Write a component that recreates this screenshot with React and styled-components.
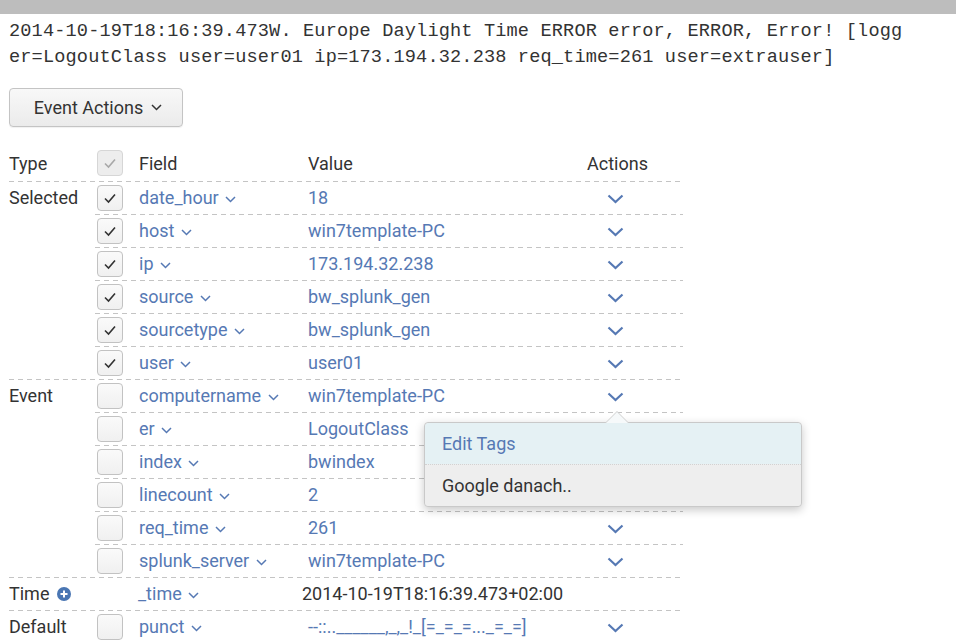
import React from "react";
import styled, { createGlobalStyle } from "styled-components";

const GlobalStyle = createGlobalStyle`
  body {
    margin: 0;
    background: #fff;
    font-family: Roboto, "Liberation Sans", sans-serif;
    color: #333;
  }
`;

const BLUE = "#5679b4";

const groups = [
  {
    type: "Selected",
    rows: [
      { field: "date_hour", value: "18", checked: true },
      { field: "host", value: "win7template-PC", checked: true },
      { field: "ip", value: "173.194.32.238", checked: true },
      { field: "source", value: "bw_splunk_gen", checked: true },
      { field: "sourcetype", value: "bw_splunk_gen", checked: true },
      { field: "user", value: "user01", checked: true },
    ],
  },
  {
    type: "Event",
    rows: [
      { field: "computername", value: "win7template-PC", menu: true },
      { field: "er", value: "LogoutClass" },
      { field: "index", value: "bwindex" },
      { field: "linecount", value: "2" },
      { field: "req_time", value: "261" },
      { field: "splunk_server", value: "win7template-PC" },
    ],
  },
  {
    type: "Time",
    plus: true,
    rows: [
      { field: "_time", value: "2014-10-19T18:16:39.473+02:00", noBox: true, plain: true, noAction: true },
    ],
  },
  {
    type: "Default",
    rows: [{ field: "punct", value: "--::..______,_,_!_[=_=_=..._=_=]" }],
  },
];

function Caret({ color = BLUE }) {
  return (
    <CaretSvg width="11" height="7" viewBox="0 0 11 7">
      <polyline points="1,1 5.5,5.5 10,1" fill="none" stroke={color} strokeWidth="1.5" />
    </CaretSvg>
  );
}

function ActionCaret() {
  return (
    <svg width="17" height="10" viewBox="0 0 17 10">
      <polyline points="1.5,1.5 8.5,8 15.5,1.5" fill="none" stroke={BLUE} strokeWidth="2.2" />
    </svg>
  );
}

function Check({ color }) {
  return (
    <svg width="14" height="12" viewBox="0 0 14 12">
      <polyline points="2,6.5 5.5,10 12,2.5" fill="none" stroke={color} strokeWidth="1.6" />
    </svg>
  );
}

function PlusCircle() {
  return (
    <svg width="14" height="14" viewBox="0 0 14 14">
      <circle cx="7" cy="7" r="7" fill="#4a76b3" />
      <path d="M7 3.5v7M3.5 7h7" stroke="#fff" strokeWidth="2" />
    </svg>
  );
}

export default function App() {
  return (
    <>
      <GlobalStyle />
      <TopBar>
        <TopBarLabel>Event</TopBarLabel>
      </TopBar>
      <Page>
        <RawEvent>
          2014-10-19T18:16:39.473W. Europe Daylight Time ERROR error, ERROR, Error! [logger=LogoutClass user=user01 ip=173.194.32.238 req_time=261 user=extrauser]
        </RawEvent>
        <ActionButton>
          Event Actions <Caret color="#333" />
        </ActionButton>
        <Table>
          <HeaderRow>
            <TypeCell>Type</TypeCell>
            <BoxCell>
              <CheckBox $muted>
                <Check color="#a8a8a8" />
              </CheckBox>
            </BoxCell>
            <FieldCell $head>Field</FieldCell>
            <ValueCell $plain>Value</ValueCell>
            <ActionCell>Actions</ActionCell>
          </HeaderRow>
          {groups.map((g) => (
            <Group key={g.type}>
              <TypeCell>
                {g.type}
                {g.plus && (
                  <PlusWrap>
                    <PlusCircle />
                  </PlusWrap>
                )}
              </TypeCell>
              <Rows>
                {g.rows.map((r) => (
                  <Row key={r.field}>
                    <BoxCell>
                      {!r.noBox && (
                        <CheckBox>{r.checked && <Check color="#333" />}</CheckBox>
                      )}
                    </BoxCell>
                    <FieldCell $shift={r.noBox}>
                      {r.field} <Caret />
                    </FieldCell>
                    <ValueCell $plain={r.plain} $shift={r.plain}>
                      {r.value}
                    </ValueCell>
                    <ActionCell>
                      {!r.noAction && (
                        <ActionIcon>
                          <ActionCaret />
                        </ActionIcon>
                      )}
                      {r.menu && (
                        <Menu>
                          <MenuItem $active>Edit Tags</MenuItem>
                          <MenuItem>Google danach..</MenuItem>
                        </Menu>
                      )}
                    </ActionCell>
                  </Row>
                ))}
              </Rows>
            </Group>
          ))}
        </Table>
      </Page>
    </>
  );
}

const dashed = `
  background-image: linear-gradient(to right, #c4c4c4 0, #c4c4c4 5px, transparent 5px);
  background-size: 9px 1px;
  background-repeat: repeat-x;
  background-position: 0 0;
`;

const TopBar = styled.div`
  height: 14px;
  background: #bdbdbd;
  overflow: hidden;
  padding-left: 9px;
`;

const TopBarLabel = styled.div`
  font-size: 18px;
  line-height: 18px;
  margin-top: -15px;
  color: #777;
`;

const Page = styled.div`
  padding: 0 9px;
`;

const RawEvent = styled.div`
  width: 897px;
  padding-top: 5px;
  font-family: "Liberation Mono", "DejaVu Sans Mono", monospace;
  font-size: 18.6px;
  letter-spacing: 0.15px;
  line-height: 26px;
  color: #333;
  word-break: break-all;
`;

const ActionButton = styled.button`
  margin-top: 17px;
  height: 39px;
  width: 174px;
  display: flex;
  align-items: center;
  justify-content: center;
  gap: 6px;
  padding: 0 0 0 4px;
  font-family: Roboto, "Liberation Sans", sans-serif;
  font-size: 18px;
  color: #333;
  background: linear-gradient(#f8f8f8, #ebebeb);
  border: 1px solid #c4c4c4;
  border-radius: 4px;
  box-shadow: 0 1px 1px rgba(0, 0, 0, 0.06);
`;

const CaretSvg = styled.svg`
  display: inline-block;
  vertical-align: middle;
  margin-left: 2px;
`;

const Table = styled.div`
  margin-top: 18px;
  width: 674px;
  font-size: 18px;
`;

const HeaderRow = styled.div`
  display: flex;
  align-items: center;
  height: 36px;
`;

const Group = styled.div`
  display: flex;
  ${dashed}
`;

const TypeCell = styled.div`
  width: 86px;
  flex: none;
  height: 33px;
  display: flex;
  align-items: center;
  color: #333;
`;

const PlusWrap = styled.span`
  display: inline-flex;
  margin-left: 8px;
`;

const Rows = styled.div`
  flex: 1;
  display: flex;
  flex-direction: column;
`;

const Row = styled.div`
  display: flex;
  align-items: center;
  height: 33px;
  & + & {
    ${dashed}
  }
`;

const BoxCell = styled.div`
  width: 44px;
  flex: none;
  padding-left: 2px;
  box-sizing: border-box;
  display: flex;
  align-items: center;
`;

const CheckBox = styled.div`
  width: 26px;
  height: 26px;
  box-sizing: border-box;
  border: 1px solid ${({ $muted }) => ($muted ? "#d6d6d6" : "#c2c2c2")};
  border-radius: 4px;
  background: ${({ $muted }) => ($muted ? "#ededed" : "linear-gradient(#fafafa, #f0f0f0)")};
  display: flex;
  align-items: center;
  justify-content: center;
`;

const FieldCell = styled.div`
  width: 169px;
  flex: none;
  color: ${({ $head }) => ($head ? "#333" : BLUE)};
  margin-left: ${({ $shift }) => ($shift ? "-1px" : "0")};
  white-space: nowrap;
`;

const ValueCell = styled.div`
  width: 279px;
  flex: none;
  color: ${({ $plain }) => ($plain ? "#333" : BLUE)};
  margin-left: ${({ $shift }) => ($shift ? "-5px" : "0")};
  white-space: nowrap;
`;

const ActionCell = styled.div`
  flex: 1;
  position: relative;
  height: 100%;
  display: flex;
  align-items: center;
`;

const ActionIcon = styled.span`
  display: inline-flex;
  margin-left: 20px;
  margin-top: 2px;
`;

const Menu = styled.div`
  position: absolute;
  z-index: 2;
  left: -163px;
  top: calc(100% + 10px);
  width: 376px;
  background: #eee;
  border: 1px solid #c9c9c9;
  border-radius: 4px;
  box-shadow: 0 3px 10px rgba(0, 0, 0, 0.22);

  &::before,
  &::after {
    content: "";
    position: absolute;
    left: 180px;
    width: 0;
    height: 0;
    border-left: 12px solid transparent;
    border-right: 12px solid transparent;
  }
  &::before {
    top: -12px;
    border-bottom: 12px solid #cfcfcf;
  }
  &::after {
    top: -11px;
    left: 181px;
    border-left-width: 11px;
    border-right-width: 11px;
    border-bottom: 11px solid #f6f9fa;
  }
`;

const MenuItem = styled.div`
  height: 41px;
  display: flex;
  align-items: center;
  padding-left: 17px;
  font-size: 18px;
  color: ${({ $active }) => ($active ? BLUE : "#333")};
  background: ${({ $active }) => ($active ? "#e5f1f4" : "#eeeeee")};
  border-radius: ${({ $active }) => ($active ? "4px 4px 0 0" : "0 0 4px 4px")};
  & + & {
    border-top: 1px dotted #d2d2d2;
  }
`;
